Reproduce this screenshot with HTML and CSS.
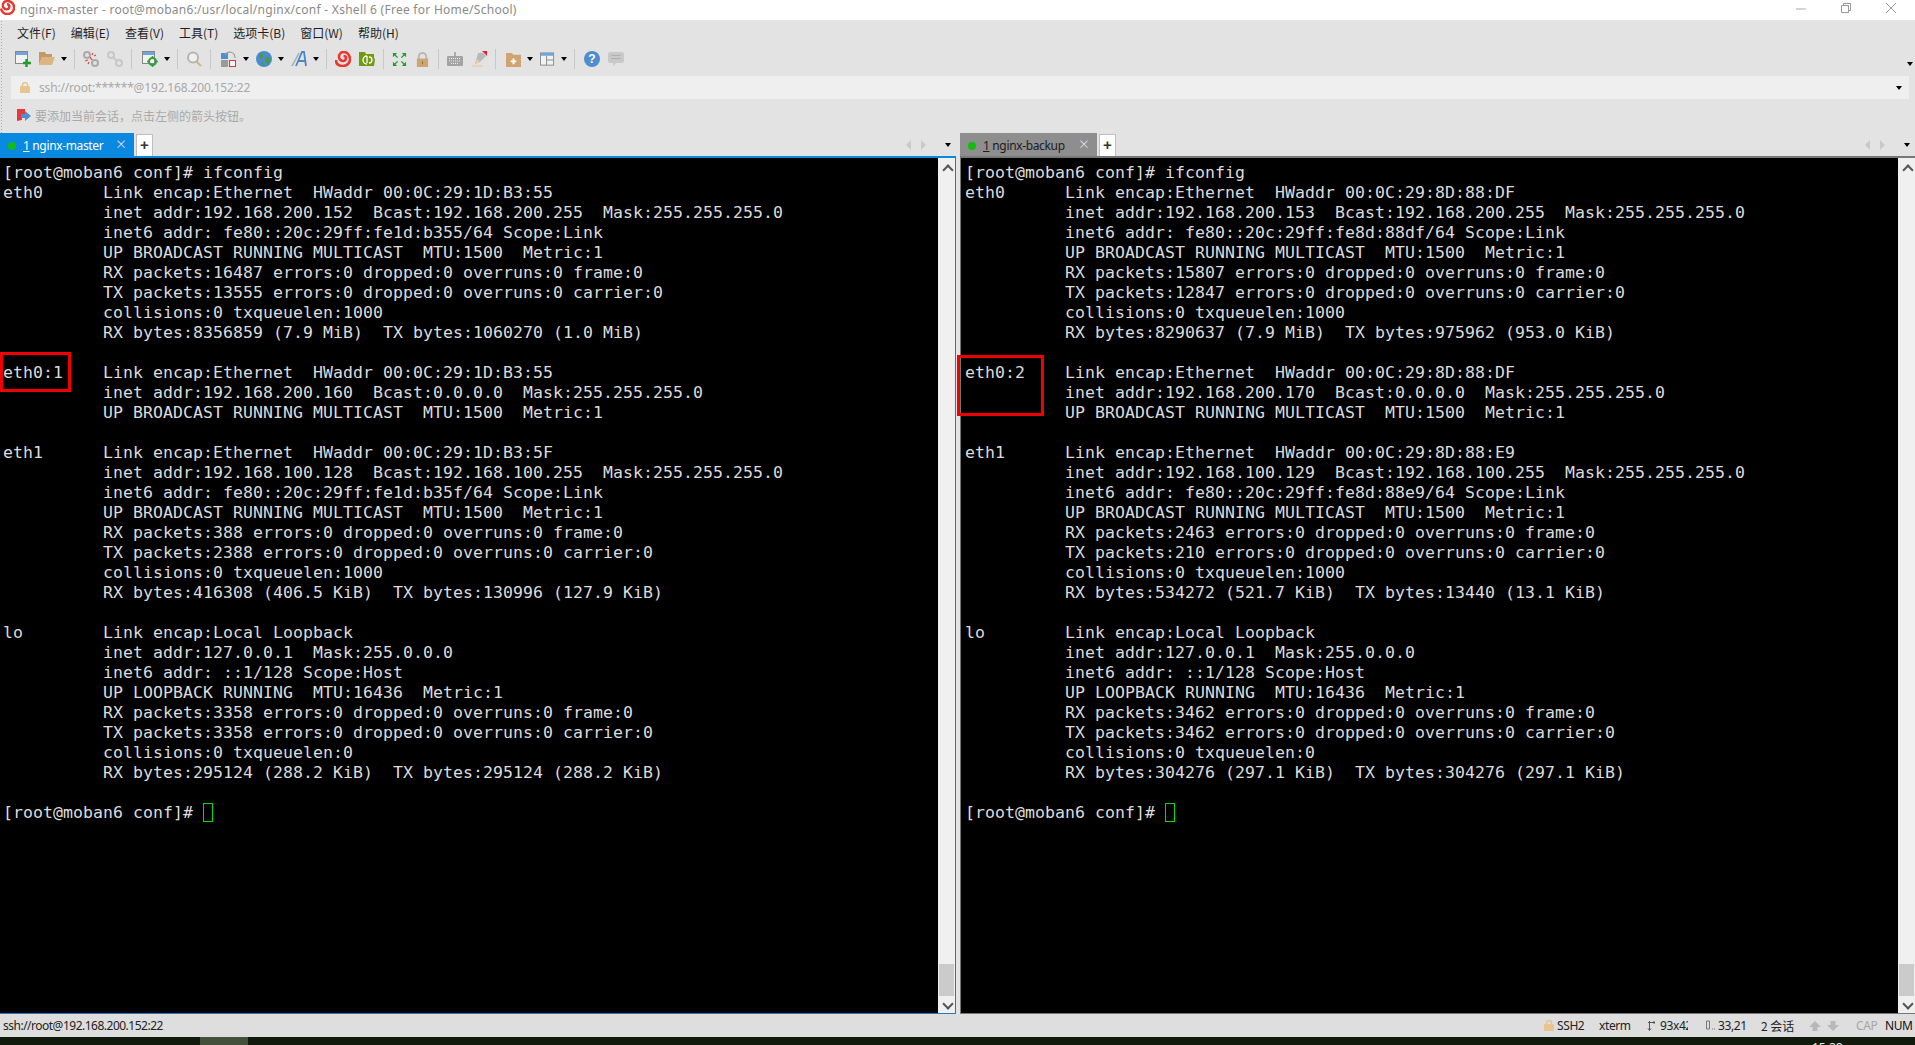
FILE: index.html
```html
<!DOCTYPE html>
<html lang="zh">
<head>
<meta charset="utf-8">
<title>nginx-master - Xshell 6</title>
<link rel="stylesheet" href="styles.css">
</head>
<body>
<div class="app">
  <header class="titlebar">
    <svg class="logo" width="15" height="15" viewBox="0 0 16 16"><path d="M1 9c1 4 4 6 7 6 4 0 7-3 7-7 0-4-3-7-7-7-3 0-5 2-5 5 0 2 2 4 4 4s3-1.500 3-3-1-2.500-2.500-2.500" fill="none" stroke="#e8392f" stroke-width="2.600"/></svg>
    <span class="title-text">nginx-master - root@moban6:/usr/local/nginx/conf - Xshell 6 (Free for Home/School)</span>
    <div class="winbtns">
      <svg width="12" height="12" viewBox="0 0 12 12"><path d="M1 7h10" stroke="#aaa" fill="none"/></svg>
      <svg width="12" height="12" viewBox="0 0 12 12"><path d="M1.500 3.500h7v7h-7zM3.500 3.500v-2h7v7h-2" stroke="#999" fill="none"/></svg>
      <svg width="12" height="12" viewBox="0 0 12 12"><path d="M1 1l10 10M11 1L1 11" stroke="#999" fill="none"/></svg>
    </div>
  </header>

  <div class="chrome">
    <nav class="menubar">
      <span>文件(F)</span><span>编辑(E)</span><span>查看(V)</span><span>工具(T)</span><span>选项卡(B)</span><span>窗口(W)</span><span>帮助(H)</span>
    </nav>

    <div class="toolbar">
      <svg class="ic" viewBox="0 0 16 16"><rect x=".5" y=".5" width="12" height="12" fill="#f2f2f2" stroke="#888"/><rect x="1" y="1" width="11" height="3" fill="#6ea6dc"/><path d="M11.500 8v8M8 12h8" stroke="#1e9e2c" stroke-width="2.400"/></svg>
      <svg class="ic" viewBox="0 0 16 16"><path d="M0 1h6l1 2h6v3H3L0 14z" fill="#c39a61"/><path d="M3 6h13l-3 8H0z" fill="#dcb580"/></svg>
      <i class="caret"></i><i class="sep"></i>
      <svg class="ic" viewBox="0 0 16 16"><circle cx="4" cy="4" r="3" fill="none" stroke="#aaa" stroke-width="2"/><circle cx="12" cy="12" r="3" fill="none" stroke="#aaa" stroke-width="2"/><path d="M7 6l2 3M10 2l-1 2M13 4l-2 1M2 10l3-1M5 13l1-2" stroke="#e34a4a" stroke-width="1.300"/></svg>
      <svg class="ic" viewBox="0 0 16 16"><circle cx="4" cy="4" r="3" fill="none" stroke="#c8c8c8" stroke-width="2"/><circle cx="12" cy="12" r="3" fill="none" stroke="#c8c8c8" stroke-width="2"/><path d="M6 6l4 4" stroke="#c8c8c8" stroke-width="2"/></svg>
      <i class="sep"></i>
      <svg class="ic wide-l" viewBox="0 0 16 16"><rect x=".5" y=".5" width="12" height="12" fill="#f2f2f2" stroke="#888"/><rect x="1" y="1" width="11" height="3" fill="#6ea6dc"/><circle cx="10.500" cy="10.500" r="3.500" fill="none" stroke="#2ea23a" stroke-width="2"/><path d="M10.500 5v2M10.500 14v2M5 10.500h2M14 10.500h2" stroke="#2ea23a" stroke-width="1.600"/></svg>
      <i class="caret"></i><i class="sep"></i>
      <svg class="ic" viewBox="0 0 16 16"><circle cx="7" cy="6.500" r="5" fill="#f0f0f0" stroke="#b4b4b4" stroke-width="2"/><path d="M10.500 10.500l4.500 4.500" stroke="#d3b892" stroke-width="2.400"/></svg>
      <i class="sep"></i>
      <svg class="ic wide-l" viewBox="0 0 16 16"><rect x="0" y="2" width="7" height="6" fill="#4d8fd3"/><rect x="0" y="9" width="7" height="7" fill="#9a9a9a"/><rect x="8.500" y="9.500" width="6" height="6" fill="#f4f4f4" stroke="#d9343a"/><path d="M8 1c4 0 6 2 6 6M4 4c1-2 3-3 5-3" fill="none" stroke="#999" stroke-width="1.200"/></svg>
      <i class="caret"></i>
      <svg class="ic" viewBox="0 0 16 16"><circle cx="8" cy="8" r="8" fill="#4a8cd0"/><path d="M3 3c3-1 5 0 4 3S4 8 3 6zM10 6c3-1 5 1 4 4s-3 4-4 2-2-4 0-6zM5 11c2 0 3 1 3 3l-2 1z" fill="#4d9a45"/></svg>
      <i class="caret"></i>
      <svg class="ic" viewBox="0 0 16 16"><path d="M1 15L8 2" stroke="#aaa" stroke-width="1.500" fill="none"/><path d="M5 15L11 1h2l2 14M7 10h7" stroke="#4a86c6" stroke-width="1.800" fill="none"/></svg>
      <i class="caret"></i><i class="sep"></i>
      <svg class="ic" viewBox="0 0 16 16"><path d="M1 9c0 4 3 6 7 6s7-3 7-7c0-4-3-7-6-7-3 0-5 2-5 5 0 2 2 4 4 4s3-1.500 3-3-1-2-2.500-2" fill="none" stroke="#e83a30" stroke-width="2.600"/></svg>
      <svg class="ic" viewBox="0 0 16 16"><path d="M0 1h6l1 2h8v4l1 1-1 7H0z" fill="#6f9a12"/><path d="M8 5a3.500 3.500 0 1 0 0 8M8 5v7M10 6a3 3 0 0 1 0 6" fill="none" stroke="#fff" stroke-width="1.300"/></svg>
      <i class="sep"></i>
      <svg class="ic ic-narrow" viewBox="0 0 16 16"><path d="M1 1h4.500L1 5.500zM15 1h-4.500L15 5.500zM1 15h4.500L1 10.500zM15 15h-4.500l4.500-4.500z" fill="#1e9e2c"/><path d="M2 2l4 4M14 2l-4 4M2 14l4-4M14 14l-4-4" stroke="#1e9e2c" stroke-width="1.500"/></svg>
      <svg class="ic ic-narrow" viewBox="0 0 16 16"><path d="M4 8V5a4 4 0 0 1 8 0v3" fill="none" stroke="#b8b8b8" stroke-width="2"/><rect x="2" y="7" width="12" height="9" fill="#cda473"/><rect x="7.500" y="10" width="1" height="3" fill="#8a6a40"/></svg>
      <i class="sep"></i>
      <svg class="ic" viewBox="0 0 16 16"><path d="M8 1v4" stroke="#777"/><rect x="0" y="5" width="16" height="10" rx="1" fill="#a3a3a3"/><path d="M2 7.500h12M2 10h12M4 12.500h8" stroke="#eee" stroke-dasharray="1 1"/></svg>
      <svg class="ic" viewBox="0 0 16 16"><path d="M7 2h5l3 3-6 6-5 2z" fill="#b9b9b9"/><path d="M11 0h5v5z" fill="#e1283a"/><path d="M1 15h11" stroke="#ebcb9d" stroke-width="1.200"/><path d="M4 13l2-5 3 3z" fill="#ebcb9d"/></svg>
      <i class="sep"></i>
      <svg class="ic ic-narrow wide-l" viewBox="0 0 16 16"><path d="M0 1h6l2 2h8v13H0z" fill="#cfa472"/><path d="M8 7v6M5 10h6" stroke="#fff" stroke-width="2"/></svg>
      <i class="caret"></i>
      <svg class="ic ic-narrow" viewBox="0 0 16 16"><rect x=".5" y="1" width="14" height="13" fill="#f2f2f2" stroke="#8a8a8a"/><rect x="1" y="1" width="13" height="3" fill="#6ea6dc"/><path d="M7 4v10M7 8.500h7" stroke="#8a8a8a" fill="none"/></svg>
      <i class="caret"></i><i class="sep"></i>
      <div class="help-ic">?</div>
      <svg class="ic" viewBox="0 0 16 16"><path d="M2 1h12a2 2 0 0 1 2 2v7a2 2 0 0 1-2 2H8l-3 3v-3H2a2 2 0 0 1-2-2V3a2 2 0 0 1 2-2z" fill="#c9c9c9"/><path d="M3 4.500h10M3 7.500h10" stroke="#b0b0b0"/></svg>
      <i class="caret toolbar-end"></i>
    </div>

    <div class="addressbar">
      <svg class="addr-lock" width="10" height="11" viewBox="0 0 10 11"><path d="M2.500 5V3a2.500 2.500 0 0 1 5 0v2" fill="none" stroke="#e8c48e" stroke-width="1.500"/><rect y="4" width="10" height="7" rx="1" fill="#e8c48e"/></svg>
      <span class="addr-text">ssh://root:******@192.168.200.152:22</span>
      <i class="caret addr-caret"></i>
    </div>

    <div class="infobar">
      <svg width="14" height="13" viewBox="0 0 14 13"><path d="M0 0h8v5H5v6L0 12z" fill="#e23a3a"/><path d="M4 5h4V2l6 5-6 5V9H4z" fill="#4d8fd3"/></svg>
      <span>要添加当前会话，点击左侧的箭头按钮。</span>
    </div>
  </div>

  <main class="panes">
    <section class="pane pane-left">
      <div class="tabstrip">
        <div class="tab tab-active"><i class="dot"></i><span class="tab-label"><u>1</u> nginx-master</span><span class="tab-x">×</span></div>
        <div class="tab-add">+</div>
        <div class="tab-nav"><i class="arr-l"></i><i class="arr-r"></i><i class="caret"></i></div>
      </div>
      <div class="term-wrap term-wrap-active">
        <div class="term">
<pre class="term-text">[root@moban6 conf]# ifconfig
eth0      Link encap:Ethernet  HWaddr 00:0C:29:1D:B3:55  
          inet addr:192.168.200.152  Bcast:192.168.200.255  Mask:255.255.255.0
          inet6 addr: fe80::20c:29ff:fe1d:b355/64 Scope:Link
          UP BROADCAST RUNNING MULTICAST  MTU:1500  Metric:1
          RX packets:16487 errors:0 dropped:0 overruns:0 frame:0
          TX packets:13555 errors:0 dropped:0 overruns:0 carrier:0
          collisions:0 txqueuelen:1000 
          RX bytes:8356859 (7.9 MiB)  TX bytes:1060270 (1.0 MiB)

eth0:1    Link encap:Ethernet  HWaddr 00:0C:29:1D:B3:55  
          inet addr:192.168.200.160  Bcast:0.0.0.0  Mask:255.255.255.0
          UP BROADCAST RUNNING MULTICAST  MTU:1500  Metric:1

eth1      Link encap:Ethernet  HWaddr 00:0C:29:1D:B3:5F  
          inet addr:192.168.100.128  Bcast:192.168.100.255  Mask:255.255.255.0
          inet6 addr: fe80::20c:29ff:fe1d:b35f/64 Scope:Link
          UP BROADCAST RUNNING MULTICAST  MTU:1500  Metric:1
          RX packets:388 errors:0 dropped:0 overruns:0 frame:0
          TX packets:2388 errors:0 dropped:0 overruns:0 carrier:0
          collisions:0 txqueuelen:1000 
          RX bytes:416308 (406.5 KiB)  TX bytes:130996 (127.9 KiB)

lo        Link encap:Local Loopback  
          inet addr:127.0.0.1  Mask:255.0.0.0
          inet6 addr: ::1/128 Scope:Host
          UP LOOPBACK RUNNING  MTU:16436  Metric:1
          RX packets:3358 errors:0 dropped:0 overruns:0 frame:0
          TX packets:3358 errors:0 dropped:0 overruns:0 carrier:0
          collisions:0 txqueuelen:0 
          RX bytes:295124 (288.2 KiB)  TX bytes:295124 (288.2 KiB)

[root@moban6 conf]# <i class="cursor"></i></pre>
          <div class="redbox redbox-left"></div>
        </div>
        <div class="scrollbar"><i class="chev-up"></i><i class="thumb"></i><i class="chev-down"></i></div>
      </div>
    </section>

    <section class="pane pane-right">
      <div class="tabstrip">
        <div class="tab tab-idle"><i class="dot"></i><span class="tab-label"><u>1</u> nginx-backup</span><span class="tab-x">×</span></div>
        <div class="tab-add">+</div>
        <div class="tab-nav"><i class="arr-l"></i><i class="arr-r"></i><i class="caret"></i></div>
      </div>
      <div class="term-wrap term-wrap-idle">
        <div class="term">
<pre class="term-text">[root@moban6 conf]# ifconfig
eth0      Link encap:Ethernet  HWaddr 00:0C:29:8D:88:DF  
          inet addr:192.168.200.153  Bcast:192.168.200.255  Mask:255.255.255.0
          inet6 addr: fe80::20c:29ff:fe8d:88df/64 Scope:Link
          UP BROADCAST RUNNING MULTICAST  MTU:1500  Metric:1
          RX packets:15807 errors:0 dropped:0 overruns:0 frame:0
          TX packets:12847 errors:0 dropped:0 overruns:0 carrier:0
          collisions:0 txqueuelen:1000 
          RX bytes:8290637 (7.9 MiB)  TX bytes:975962 (953.0 KiB)

eth0:2    Link encap:Ethernet  HWaddr 00:0C:29:8D:88:DF  
          inet addr:192.168.200.170  Bcast:0.0.0.0  Mask:255.255.255.0
          UP BROADCAST RUNNING MULTICAST  MTU:1500  Metric:1

eth1      Link encap:Ethernet  HWaddr 00:0C:29:8D:88:E9  
          inet addr:192.168.100.129  Bcast:192.168.100.255  Mask:255.255.255.0
          inet6 addr: fe80::20c:29ff:fe8d:88e9/64 Scope:Link
          UP BROADCAST RUNNING MULTICAST  MTU:1500  Metric:1
          RX packets:2463 errors:0 dropped:0 overruns:0 frame:0
          TX packets:210 errors:0 dropped:0 overruns:0 carrier:0
          collisions:0 txqueuelen:1000 
          RX bytes:534272 (521.7 KiB)  TX bytes:13440 (13.1 KiB)

lo        Link encap:Local Loopback  
          inet addr:127.0.0.1  Mask:255.0.0.0
          inet6 addr: ::1/128 Scope:Host
          UP LOOPBACK RUNNING  MTU:16436  Metric:1
          RX packets:3462 errors:0 dropped:0 overruns:0 frame:0
          TX packets:3462 errors:0 dropped:0 overruns:0 carrier:0
          collisions:0 txqueuelen:0 
          RX bytes:304276 (297.1 KiB)  TX bytes:304276 (297.1 KiB)

[root@moban6 conf]# <i class="cursor"></i></pre>
          <div class="redbox redbox-right"></div>
        </div>
        <div class="scrollbar"><i class="chev-up"></i><i class="thumb"></i><i class="chev-down"></i></div>
      </div>
    </section>
  </main>

  <footer class="statusbar">
    <span class="st-url">ssh://root@192.168.200.152:22</span>
    <div class="st-right">
      <span class="st-item st-ssh"><svg width="10" height="11" viewBox="0 0 10 11"><path d="M2.500 5V3a2.500 2.500 0 0 1 5 0v2" fill="none" stroke="#e8c48e" stroke-width="1.500"/><rect y="4" width="10" height="7" rx="1" fill="#e8c48e"/></svg>SSH2</span>
      <span class="st-item st-xterm">xterm</span>
      <span class="st-item st-size"><svg width="9" height="11" viewBox="0 0 9 11"><path d="M2.500 1v9M1 2.500h7M7 1v3M1 8.500l1.500 2 1.500-2" stroke="#555" fill="none"/></svg><span class="st-clip">93x42</span></span>
      <span class="st-item st-pos"><svg width="9" height="11" viewBox="0 0 9 11"><path d="M.5 1v8M3.500 1v8M.5 1h3M.5 9h3M6 9h1M8 9h1" stroke="#777" fill="none"/></svg>33,21</span>
      <span class="st-item st-sess">2 会话</span>
      <span class="st-item st-arrows">
        <svg width="12" height="10" viewBox="0 0 12 10"><path d="M6 0l6 6H8.500v4h-5V6H0z" fill="#b8b8b8"/></svg>
        <svg width="12" height="10" viewBox="0 0 12 10"><path d="M6 10l6-6H8.500V0h-5v4H0z" fill="#b8b8b8"/></svg>
      </span>
      <span class="st-item st-cap">CAP</span>
      <span class="st-item st-num">NUM</span>
    </div>
  </footer>

  <div class="desktop"><i class="desk-btn"></i><span class="desk-clock">15:28</span></div>
</div>
</body>
</html>
```

FILE: styles.css
```css
* { box-sizing: border-box; }
html, body { margin: 0; padding: 0; height: 100%; overflow: hidden; background: #e3e3e3; }
body { font-family: "Noto Sans CJK SC", "Noto Sans", sans-serif; font-size: 12px; color: #222; }
i { display: block; font-style: normal; }
svg { display: block; flex: none; }

.app { display: flex; flex-direction: column; width: 1915px; height: 1045px; }

/* title bar */
.titlebar { height: 20px; background: #fff; display: flex; align-items: center; flex: none; }
.logo { margin-left: 0; margin-top: -6px; }
.title-text { margin-left: 5px; font-family: "Noto Sans", "Noto Sans CJK SC", sans-serif; font-size: 12px; letter-spacing: .27px; color: #8a8a8a; line-height: 16px; }
.winbtns { margin-left: auto; display: flex; gap: 33px; padding-right: 18px; margin-top: -5px; }

/* chrome */
.chrome {
  flex: none; height: 113px; display: flex; flex-direction: column;
  background: #e3e3e3;
  background-image: radial-gradient(#a9a9a9 .7px, transparent .8px);
  background-size: 3px 3px; background-repeat: repeat-y; background-position: 0 0;
}
.menubar { height: 26px; display: flex; gap: 15px; padding: 0 0 0 17px; align-items: center; flex: none; }
.menubar span { line-height: 16px; color: #1f1f1f; }

.toolbar { height: 28px; display: flex; align-items: center; padding-left: 15px; flex: none; margin-top: -1px; margin-bottom: 3px; }
.ic { width: 16px; height: 16px; margin-right: 8px; }
.ic-narrow { width: 15px; height: 15px; }
.wide-l { margin-left: 2px; }
.caret { width: 0; height: 0; border-style: solid; border-width: 4px 3.500px 0; border-color: #000 transparent transparent; flex: none; margin-left: -2px; margin-right: 7px; }
.sep { width: 1px; height: 20px; background: #c8c8c8; margin-left: 0; margin-right: 8px; flex: none; }
.toolbar-end { margin-left: auto; margin-right: 2px; margin-top: 10px; }
.help-ic { width: 16px; height: 16px; margin: 0 8px 0 1px; border-radius: 50%; background: #4f8dcf; color: #fff; font: bold 12px/16px "Liberation Sans", sans-serif; text-align: center; flex: none; }

.addressbar { height: 23px; margin: 0 6px 0 11px; background: #efefef; display: flex; align-items: center; padding-left: 9px; flex: none; }
.addr-text { margin-left: 9px; color: #a8a8a8; font-family: "Noto Sans", sans-serif; font-size: 12px; letter-spacing: -.17px; line-height: 16px; }
.addr-caret { margin-left: auto; margin-right: 7px; }

.infobar { flex: 1; display: flex; align-items: center; padding-left: 17px; gap: 4px; color: #a9a9a9; padding-bottom: 1px; }

/* panes */
.panes { flex: 1; min-height: 0; display: grid; grid-template-columns: 956px 955px; grid-template-rows: minmax(0, 1fr); column-gap: 4px; }
.pane { display: flex; flex-direction: column; min-width: 0; min-height: 0; }
.tabstrip { height: 23px; display: flex; align-items: flex-end; flex: none; }
.tab { display: flex; align-items: center; height: 23px; position: relative; flex: none; padding-top: 2px; }
.tab-active { width: 134px; background: #0a89e0; color: #fff; }
.tab-idle { width: 137px; background: #8e8e8e; color: #1c1c1c; }
.dot { width: 8px; height: 8px; border-radius: 50%; background: #11bd11; margin-left: 8px; flex: none; }
.tab-label { margin-left: 7px; font-family: "Noto Sans", sans-serif; line-height: 16px; letter-spacing: -.35px; }
.tab-x { margin-left: auto; margin-right: 7px; font-size: 12px; line-height: 14px; color: #dcdcdc; margin-top: -3px; }
.tab-add { width: 17px; height: 22px; margin-left: 2px; background: #fff; border: 1px solid #bfbfbf; border-bottom: 0; font: bold 15px/20px "Liberation Sans", sans-serif; text-align: center; color: #333; flex: none; }
.tab-nav { margin-left: auto; display: flex; align-items: center; height: 23px; }
.arr-l, .arr-r { width: 0; height: 0; border-style: solid; border-color: transparent; flex: none; }
.arr-l { border-width: 5px 5px 5px 0; border-right-color: #c9c9c9; margin-right: 10px; }
.arr-r { border-width: 5px 0 5px 5px; border-left-color: #c9c9c9; margin-right: 19px; }
.tab-nav .caret { margin: 0 5px 0 0; }

.term-wrap { flex: 1; min-height: 0; display: flex; }
.term-wrap-active { border-top: 2px solid #0a89e0; border-right: 1px solid #1b7cc4; border-bottom: 1px solid #1b7cc4; }
.term-wrap-idle { border-top: 2px solid #777; border-left: 1px solid #777; border-bottom: 1px solid #777; }
.term { flex: 1; min-width: 0; background: #000; position: relative; padding: 5px 0 0 3px; }
.term-text { margin: 0; font-family: "DejaVu Sans Mono", monospace; font-size: 16.500px; letter-spacing: .065px; line-height: 20px; color: #dcdcdc; white-space: pre; }
.cursor { display: inline-block; width: 10px; height: 19px; border: 1.500px solid #00e000; vertical-align: -4px; }
.term-wrap-idle .term { padding-left: 4px; }

.redbox { position: absolute; border: 3px solid #f00000; }
.redbox-left { left: 0; top: 194px; width: 71px; height: 40px; }
.redbox-right { left: -4px; top: 197px; width: 87px; height: 61px; }

.scrollbar { width: 17px; flex: none; background: #f0f0f0; position: relative; }
.thumb { position: absolute; left: 1px; right: 1px; bottom: 17px; height: 32px; background: #cbcbcb; }
.chev-up, .chev-down { position: absolute; left: 4px; width: 9px; height: 9px; }
.chev-up::before, .chev-down::before { content: ""; position: absolute; left: 1.500px; width: 6px; height: 6px; border-left: 2px solid #555; border-top: 2px solid #555; transform: rotate(45deg); }
.chev-up { top: 6px; }
.chev-up::before { top: 2px; }
.chev-down { bottom: 4px; }
.chev-down::before { top: 0; transform: rotate(225deg); }

/* status */
.statusbar { height: 23px; flex: none; background: #dedede; display: flex; align-items: center; font-family: "Noto Sans", "Noto Sans CJK SC", sans-serif; letter-spacing: -.4px; }
.statusbar span { line-height: 16px; }
.st-url { margin-left: 3px; color: #222; letter-spacing: -.5px; }
.st-right { margin-left: auto; display: flex; align-items: center; }
.st-item { display: flex; align-items: center; flex: none; }
.st-ssh { gap: 3px; width: 55px; }
.st-xterm { width: 48px; }
.st-size { gap: 4px; width: 59px; }
.st-clip { width: 28px; overflow: hidden; white-space: nowrap; display: block; }
.st-pos { gap: 3px; width: 55px; }
.st-sess { width: 48px; font-family: "Noto Sans CJK SC", sans-serif; letter-spacing: 0; }
.st-arrows { gap: 6px; width: 47px; }
.st-cap { color: #a6a6a6; width: 29px; }
.st-num { width: 30px; color: #111; }

.desktop { flex: none; height: 8px; background: #111a0c; display: flex; position: relative; overflow: hidden; }
.desk-btn { width: 48px; margin-left: 200px; background: #444f3c; }
.desk-clock { position: absolute; left: 1812px; top: 3px; color: #e8e8e8; font: 12px/16px "Noto Sans", sans-serif; }
```
